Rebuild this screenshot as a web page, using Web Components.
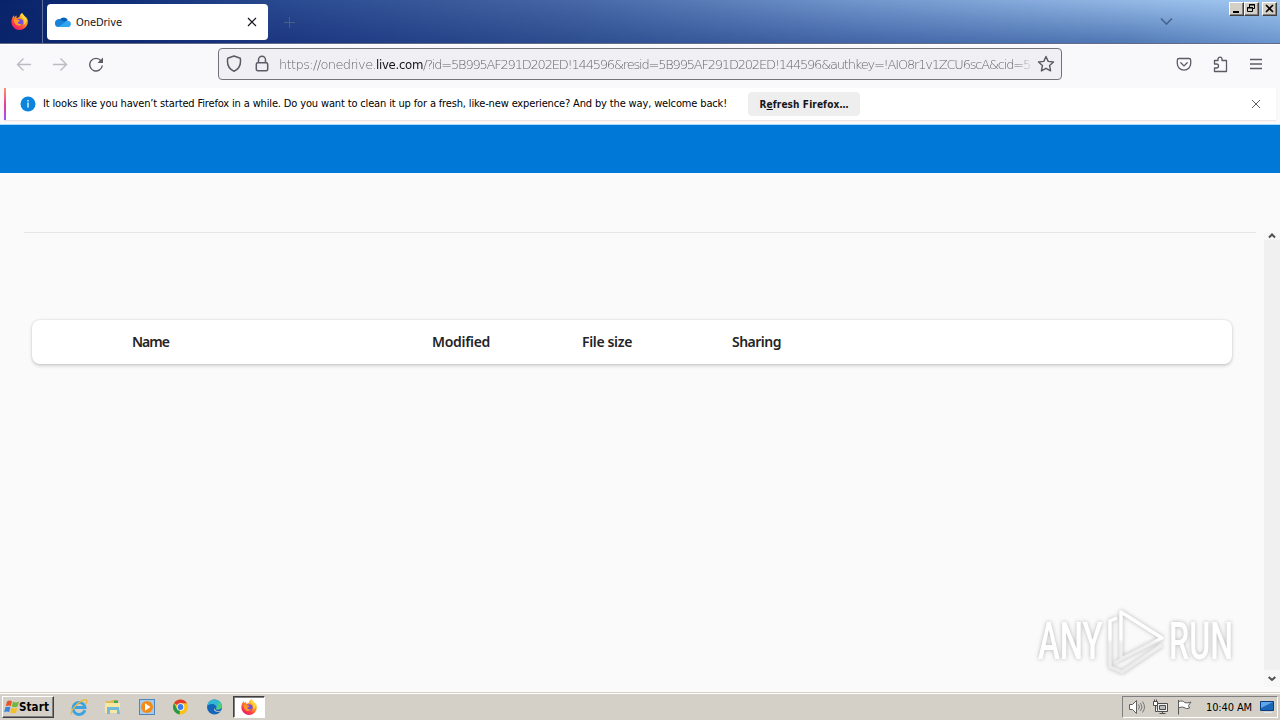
<!DOCTYPE html>
<html lang="en">
<head>
<meta charset="utf-8">
<title>OneDrive</title>
<style>
body{margin:0;width:1280px;height:720px;overflow:hidden;font-family:"DejaVu Sans Condensed","DejaVu Sans",sans-serif}
</style>
</head>
<body>
<desktop-screen></desktop-screen>
<script>
const define=(name,css,html)=>customElements.define(name,class extends HTMLElement{
  connectedCallback(){
    if(this.shadowRoot)return;
    const t=document.createElement('template');
    t.innerHTML=`<style>*{box-sizing:border-box}svg{display:block;flex:none}${css}</style>${html}`;
    this.attachShadow({mode:'open'}).append(t.content.cloneNode(true));
  }
});

/* Text run spaced out to a given width in pixels */
customElements.define('fit-text',class extends HTMLElement{
  connectedCallback(){
    if(this.shadowRoot)return;
    const root=this.attachShadow({mode:'open'});
    root.innerHTML='<style>:host{display:inline-block;white-space:pre;flex:none}span{display:inline-block}</style><span><slot></slot></span>';
    const span=root.querySelector('span'),w=+this.getAttribute('w');
    const n=this.textContent.length;
    span.style.letterSpacing=((w-span.getBoundingClientRect().width)/n)+'px';
    this.style.width=w+'px';
  }
});

const firefox=(s,id)=>`<svg width="${s}" height="${s}" viewBox="0 0 16 16"><defs>
<linearGradient id="${id}" x1=".85" y1=".1" x2=".2" y2="1"><stop offset="0" stop-color="#ffe43d"/><stop offset=".35" stop-color="#ff9a1f"/><stop offset=".7" stop-color="#ff3d45"/><stop offset="1" stop-color="#e3187d"/></linearGradient></defs>
<path fill="url(#${id})" d="M15.3 5.6c-.4-.9-1.1-1.8-1.7-2.1.4.9.7 1.7.8 2.4-.9-2.1-2.3-3-3.500-4.900C10.700.6 10.500.3 10.400 0 8.500 1.100 7.900 3.100 7.800 4.100c-.9 0-1.700.3-2.400.8C5 3.900 5.200 3 5.500 2.400 4.500 2.800 3.800 3.500 3.300 4.100c-.3-.4-.3-1.700-.3-2C2 2.900 1.200 4.200.8 5.600.1 7.600.2 10.400 1.700 12.600 3.100 14.700 5.400 16 8 16c4.300 0 7.800-3.400 7.800-7.700 0-1-.2-1.900-.5-2.700z"/>
<circle cx="8.200" cy="8.600" r="3.300" fill="#7a4be0"/><path fill="#ff9a25" d="M2.600 6.200c1.700-.9 3-.3 3.900.4 1 .1 1.800.1 1.900.5-.1.900-1.700 1-2.100 2 .5 1.500 2.800 1.800 4.100.7-.7 2.400-4.600 3.200-6.400.6C3 9 2.600 7.600 2.600 6.200z"/>
<path fill="#ffd93a" d="M10.400 0c-1.300 1.800-.3 3.700 1 5 1.600 1.600 1.700 4.500.1 6.300 2.400-1.200 3.600-4 2.900-6.300-.8-1.700-2.700-2.900-4-5z"/></svg>`;

define('caption-button',`:host{width:15px;height:14px;display:block;background:#d4d0c8;border:1px solid;border-color:#fff #404040 #404040 #fff;box-shadow:inset -1px -1px #808080}`,`<slot></slot>`);

define('tab-strip',`
:host{display:flex;height:44px;position:relative;background:linear-gradient(90deg,#0a246a 0,#11307a 10%,#29498f 21%,#4767a6 45%,#6f95cb 66%,#96bce8 90%,#a2c9f2 100%);border-bottom:1px solid #626a85}
:host::before{content:"";position:absolute;inset:0;background:linear-gradient(90deg,#0a246a 0,#112c72 10%,#1b367f 21%,#2d4d8f 45%,#4366a8 68%,#5178b4 88%,#6b95cd 100%);-webkit-mask:linear-gradient(180deg,transparent,#000);mask:linear-gradient(180deg,transparent,#000)}
:host>*{position:relative}
.ff{width:43px;border-right:1px solid #606f9e;padding:13px 0 0 11px}
.tab{width:221px;height:36px;margin:4px 0 0 4px;background:#fff;border-radius:4px;display:flex;align-items:center;padding:0 11px 0 8px;color:#15141a;font-size:11px}
.tab fit-text{margin:1px auto 0 5px}
.plus{margin:17px auto 0 16px}
.chev{margin:17px 56px 0 0}
.caps{display:flex;margin:2px 3px 0 0}
caption-button:last-child{margin-left:3px}`,
`<div class="ff">${firefox(17,'fa')}</div>
<div class="tab"><svg width="16" height="16" viewBox="0 0 16 16"><path fill="#0a62b8" d="M5 5.300A4.600 4.600 0 0 1 12.800 6L9 9 3 6.400z"/><path fill="#1683d8" d="M0 9.500A3.800 3.800 0 0 1 6 5.900L13 9.500 3.500 13A3.500 3.500 0 0 1 0 9.500z"/><path fill="#31a5ee" d="M3.500 13 9.500 8.200 12.500 6.500A3.400 3.400 0 0 1 15.500 11.500C15 12.600 14.200 13 13 13z"/></svg>
<fit-text w="46">OneDrive</fit-text>
<svg width="10" height="10" viewBox="0 0 10 10"><path d="M1 1l8 8M9 1l-8 8" stroke="#15141a" stroke-width="1.200"/></svg></div>
<svg class="plus" width="11" height="11" viewBox="0 0 11 11"><path d="M5.500 0v11M0 5.500h11" stroke="#4a5f80"/></svg>
<svg class="chev" width="13" height="9" viewBox="0 0 13 9"><path d="M1 1.500l5.500 5.500L12 1.500" fill="none" stroke="#486590" stroke-width="1.700"/></svg>
<div class="caps"><caption-button><svg width="13" height="12"><path d="M3 9h6" stroke="#000" stroke-width="2"/></svg></caption-button>
<caption-button><svg width="13" height="12" fill="none" stroke="#000"><path d="M4.500 4V1.500h5v4H8M4 2h6M2.500 4.500h5v4h-5zM2 5h6"/></svg></caption-button>
<caption-button><svg width="13" height="12"><path d="M3 2l7 7M10 2L3 9" stroke="#000" stroke-width="1.600"/></svg></caption-button></div>`);

define('address-bar',`
:host{display:flex;width:844px;height:32px;border:1px solid #73737b;border-radius:4px;background:#f0f0f4;align-items:center;padding:0 6px 0 7px}
.lock{margin:0 9px 0 12px}
.url{width:752px;white-space:nowrap;display:flex;font:200 13px "DejaVu Sans","DejaVu Sans Condensed",sans-serif;color:#66666e;-webkit-mask:linear-gradient(90deg,#000 98%,rgba(0,0,0,.2));mask:linear-gradient(90deg,#000 98%,rgba(0,0,0,.2))}
b{font-weight:400;color:#15141a;font-family:"DejaVu Sans Condensed","DejaVu Sans",sans-serif}
.star{margin-left:auto}`,
`<svg width="16" height="18" viewBox="0 0 16 18" fill="none" stroke="#5b5b66" stroke-width="1.500" stroke-linejoin="round"><path d="M8 1L14.300 3.300C15.200 9.300 13.200 14 8 16.300 2.800 14 .8 9.300 1.700 3.300z"/></svg>
<svg class="lock" width="16" height="18" viewBox="0 0 16 18" fill="none" stroke="#5b5b66" stroke-width="1.500"><rect x="2.300" y="7.800" width="11.400" height="7.900" rx="1.500"/><path d="M4.500 7.500V4.700a3.500 3.500 0 0 1 7 0v2.800"/></svg>
<div class="url"><fit-text w="97">https://onedrive.</fit-text><b><fit-text w="47">live.com</fit-text></b><fit-text w="607">/?id=5B995AF291D202ED!144596&amp;resid=5B995AF291D202ED!144596&amp;authkey=!AIO8r1v1ZCU6scA&amp;cid=5</fit-text></div>
<svg class="star" width="18" height="18" viewBox="0 0 18 18" fill="none" stroke="#5b5b66" stroke-width="1.400" stroke-linejoin="round"><path d="M9 1.500l2.200 4.900 5.300.6-3.900 3.600 1 5.300L9 13.300l-4.600 2.600 1-5.300L1.500 7l5.300-.6z"/></svg>`);

define('nav-toolbar',`
:host{display:flex;height:44px;background:#f9f9fb;align-items:center;padding:0 16px 4px;box-shadow:inset 0 1px #fff}
.r{margin:0 20px}.reload{margin-right:114px}
address-bar{margin-right:auto}
.p{margin-right:20px}.x{margin-right:19px}`,
`<svg width="16" height="16" viewBox="0 0 16 16" fill="none" stroke="#bbbbc2" stroke-width="1.400"><path d="M15 8.500H1.500M7.500 2.500l-6 6 6 6"/></svg>
<svg class="r" width="16" height="16" viewBox="0 0 16 16" fill="none" stroke="#bbbbc2" stroke-width="1.400"><path d="M1 8.500h13.500M8.500 2.500l6 6-6 6"/></svg>
<svg class="reload" width="16" height="16" viewBox="0 0 16 16"><path d="M13 4.800A6.300 6.300 0 1 0 14.300 9.500" fill="none" stroke="#5b5b66" stroke-width="1.400"/><path d="M15 1.500V7H9.500z" fill="#5b5b66"/></svg>
<address-bar></address-bar>
<svg class="p" width="16" height="16" viewBox="0 0 16 16" fill="none" stroke="#5b5b66" stroke-width="1.300"><path d="M3 2.500h10a1.700 1.700 0 0 1 1.700 1.700V7.500a6.700 6.700 0 0 1-13.400 0V4.200A1.700 1.700 0 0 1 3 2.500z"/><path d="M4.800 6.800L8 9.900l3.200-3.100" stroke-linecap="round"/></svg>
<svg class="x" width="17" height="17" viewBox="0 0 17 17" fill="none" stroke="#5b5b66" stroke-width="1.300" stroke-linejoin="round"><path d="M2.500 7V4.500H6V3.200a2 2 0 0 1 4 0v1.300h4.500V15.500h-12V12h2a2 2 0 0 0 0-4h-2z"/></svg>
<svg width="16" height="16" viewBox="0 0 16 16"><path d="M2 3.500h12M2 8h12M2 12.500h12" stroke="#5b5b66" stroke-width="1.300"/></svg>`);

define('notice-bar',`
:host{display:block;height:37px;background:#f9f9fb;padding:0 4px 0 4px;border-bottom:1px solid #a9dcfb}
.in{height:32px;background:#fff;display:flex;align-items:center;padding:0 15px 0 14px;border-left:2px solid;border-image:linear-gradient(#ff9a6c,#e23a9d 55%,#9059ff) 1;box-shadow:0 1px 1px #f3e2e2;font-size:11px;color:#000}
.msg{margin:-1px 21px 0 7px}
button{font:bold 10px "DejaVu Sans Condensed","DejaVu Sans",sans-serif;width:112px;height:24px;border:0;border-radius:4px;background:#eeeeef;padding:0;color:#15141a;margin-right:auto}
u{text-underline-offset:1px}`,
`<div class="in"><svg width="16" height="16" viewBox="0 0 16 16"><circle cx="8" cy="8" r="7.500" fill="#0a84dc"/><path d="M8 6.500v5M8 4v1.500" stroke="#fff" stroke-width="1.300"/></svg>
<fit-text class="msg" w="684">It looks like you haven’t started Firefox in a while. Do you want to clean it up for a fresh, like-new experience? And by the way, welcome back!</fit-text>
<button><fit-text w="89">R<u>e</u>fresh Firefox…</fit-text></button>
<svg width="10" height="10" viewBox="0 0 10 10"><path d="M1 1l8 8M9 1l-8 8" stroke="#5b5b66"/></svg></div>`);

define('file-list-header',`
:host{display:grid;grid-template-columns:300px 150px 150px 1fr;align-items:center;height:44px;margin:87px 32px 0;padding:0 0 1px 100px;background:#fff;border-radius:8px;box-shadow:0 1.600px 3.600px rgba(0,0,0,.17),0 0 2px rgba(0,0,0,.12);font:600 14px "Noto Sans",sans-serif;color:#242424}`,
`<fit-text w="37">Name</fit-text><fit-text w="58">Modified</fit-text><fit-text w="50">File size</fit-text><fit-text w="49">Sharing</fit-text>`);

define('scroll-rail',`
:host{display:flex;flex-direction:column;justify-content:space-between;align-items:center;width:16px;background:#f0f0f0}
span{height:7px;width:16px;background:#f7f7f7;padding:0 4px}
span:last-child{height:17px;padding-top:6px}`,
`<span><svg width="8" height="6"><path d="M1 4.500l3-3 3 3" fill="none" stroke="#505050" stroke-width="2"/></svg></span><span><svg width="8" height="6"><path d="M.7 1l3.300 3 3.300-3" fill="none" stroke="#505050" stroke-width="2"/></svg></span>`);

define('run-watermark',`:host{position:absolute;left:1030px;top:602px;width:212px;height:76px}svg{overflow:visible;filter:drop-shadow(0 0 2px rgba(0,0,0,.28))}text{font:500 51px Roboto,sans-serif}`,
`<svg width="212" height="76" viewBox="0 0 212 76"><defs><linearGradient id="w" x1="0" y1="0" x2="0" y2="76" gradientUnits="userSpaceOnUse"><stop offset=".48" stop-color="#fff"/><stop offset=".54" stop-color="#efefef"/><stop offset="1" stop-color="#eaeaea"/></linearGradient></defs>
<g fill="url(#w)"><g transform="translate(8 57) scale(.66 1)"><text textLength="98" lengthAdjust="spacingAndGlyphs">ANY</text></g><g transform="translate(139 57) scale(.66 1)"><text textLength="97" lengthAdjust="spacingAndGlyphs">RUN</text></g></g>
<g fill="none" stroke="url(#w)" stroke-width="3.400" stroke-linejoin="round"><path d="M91 57V10l41 26zM87 16l-7 3v46l12 5 40-27"/><path d="M84 61l48-25" stroke-width="2.500"/></g></svg>`);

define('onedrive-page',`
:host{display:flex;flex-direction:column;flex:1;background:#fafafa;min-height:0}
header{height:48px;background:#0078d7}
.cmd{height:60px;margin:0 24px;border-bottom:1px solid #e6e6e6}
.body{flex:1;display:flex;margin-bottom:5px}
main{flex:1}`,
`<header></header><div class="cmd"></div><div class="body"><main><file-list-header></file-list-header></main><scroll-rail></scroll-rail></div>`);

define('task-bar',`
:host{display:flex;height:28px;background:#d4d0c8;box-shadow:inset 0 1px #d4d0c8,inset 0 2px #fff;padding:3px 2px 1px 2px;align-items:center;color:#000}
.start{width:52px;height:22px;display:flex;align-items:center;padding:0 1px;border:1px solid;border-color:#fff #404040 #404040 #fff;box-shadow:inset -1px -1px #808080;font-weight:bold;font-size:11.500px;margin-right:16px}
.start fit-text{margin-left:-1px}
.app{margin-right:16px}
.act{width:32px;height:22px;background:#fff;border:1px solid;border-color:#404040 #fff #fff #404040;padding:2px 0 0 7px;margin-left:-7px;box-shadow:inset 1px 1px #808080}
.tray{margin-left:auto;width:156px;height:22px;border:1px solid;border-color:#808080 #fff #fff #808080;display:flex;align-items:center;padding-left:5px;font-size:11px}
.tray svg{margin-right:7px}.tray fit-text{margin:0 7px 0 6px}.tray svg:last-child{margin:0}`,
`<div class="start"><svg width="16" height="16" viewBox="0 0 16 16"><path fill="#e8542a" d="M3 2.500C5 1 6.500 1.500 8 2.300L6.700 7.300C5 6.300 3.500 6.500 1.700 7.300z"/><path fill="#73b63c" d="M9 2.700c2 1 4 1 6-.1l-1.400 5c-2 1-4 .8-5.900-.1z"/><path fill="#3d83d6" d="M1.400 8.300c2-.9 3.500-.9 5 0l-1.300 5c-1.500-.9-3-1-5 0z"/><path fill="#f5bd28" d="M7.400 8.700c2 .9 4 1 5.900 0l-1.300 5c-2 .9-4 .8-5.900-.1z"/></svg><fit-text w="30">Start</fit-text></div>
<svg class="app" width="18" height="18" viewBox="0 0 18 18"><path d="M14.800 12.300A6 6 0 1 1 15 9.500H5" fill="none" stroke="#3da3df" stroke-width="2.900"/><path d="M1.500 16.500C-.5 13 10 1.200 16 1.800c1.500.5 1 2.700-.5 4.200" fill="none" stroke="#e9b83b" stroke-width="1.400"/></svg>
<svg class="app" width="18" height="18" viewBox="0 0 18 18"><path fill="#e3b957" d="M2 3h5l1-1h6v12H2z"/><path fill="#f8e79f" d="M1 5h15v10H1z"/><path fill="#74b9dc" d="M3 9h12l1 7h-3v-4H6v4H3z"/><path fill="#4ba35a" d="M10 2.500h4V5h-4z"/></svg>
<svg class="app" width="18" height="18" viewBox="0 0 18 18"><rect x="1.500" y="1.500" width="15" height="15" fill="#a9cbea" stroke="#4c86bd"/><circle cx="9" cy="9" r="6" fill="#f48a18"/><path fill="#fff" d="M7 5.300v7.400l5.500-3.700z"/></svg>
<svg class="app" width="18" height="18" viewBox="0 0 18 18"><circle cx="8.500" cy="9" r="7.500" fill="#fbc116"/><path fill="#df3b2f" d="M8.500 9L2 5.200A7.500 7.500 0 0 1 15 5.300H8.500z"/><path fill="#279847" d="M8.500 9l-1 7.400A7.500 7.500 0 0 1 2 5.200L5.300 11z"/><circle cx="8.500" cy="9" r="3.800" fill="#fff"/><circle cx="8.500" cy="9" r="2.900" fill="#3b7ded"/></svg>
<svg class="app" width="18" height="18" viewBox="0 0 18 18"><circle cx="8.500" cy="9" r="7.500" fill="#1565b9"/><path fill="#31b9d3" d="M1 8.500C2 3.500 5 1.500 8.500 1.500c4 0 7.500 2.900 7.500 6.500 0 3-3.500 4.200-6 3C11.500 8.500 9 6 6 6 3.500 6 1.800 7 1 8.500z"/><path fill="#53cf7b" d="M12.500 3c5 4 3.500 8.500-.5 8.500-1.200 0-2-.3-2-.8 2-2 3-4.500 2.500-7.700z"/><path fill="#d4d0c8" d="M9 10c-.5 3 3.500 4 6.300 2.600C14 15 9 14 8 12z"/></svg>
<div class="act">${firefox(16,'fb')}</div>
<div class="tray"><svg width="17" height="16" viewBox="0 0 17 16" fill="#fff" stroke="#5f5f5f"><path d="M1.500 5.500h3l4-4v13l-4-4h-3z"/><path fill="none" d="M10.500 5.500q2 2.500 0 5M12.500 4q3 4 0 8M14.500 2.500q4 5.500 0 11" stroke="#777"/></svg>
<svg width="17" height="16" viewBox="0 0 17 16" fill="#eee" stroke="#4d4d4d"><path d="M5.500 4.500h10v8h-10zM7.500 14.500h6M10.500 12.500v2"/><path fill="#bbb" d="M7.500 6.500h6v4h-6z"/><path fill="#fff" d="M1.500 2.500h4v4h-4zM2.500.5v2M4.500.5v2M3.500 6.500v6h2"/></svg>
<svg width="17" height="16" viewBox="0 0 17 16" fill="#fff" stroke="#5a5a5a"><path d="M2.500 1v14.500M2.500 2.500c3-1 5-.5 6 .8 2 1 4 .6 6.500-.3l-2.500 3.500 1 2.500c-2 1-4 .5-5.500-.5-2-.8-3.500-.3-5.500.5z"/></svg>
<fit-text w="46">10:40 AM</fit-text>
<svg width="16" height="16" viewBox="0 0 16 16"><path fill="#1c66b8" stroke="#0b3e80" d="M1.500 2.500h13v9h-13z"/><path fill="#5ca6e9" d="M2 3h12L2 9z"/><path fill="#d9e8f5" d="M5 13h8v1H5z"/></svg></div>`);

define('desktop-screen',`:host{display:flex;flex-direction:column;width:1280px;height:720px;position:relative;overflow:hidden}
tab-strip,nav-toolbar,notice-bar,task-bar{flex:none}`,
`<tab-strip></tab-strip><nav-toolbar></nav-toolbar><notice-bar></notice-bar><onedrive-page></onedrive-page><task-bar></task-bar><run-watermark></run-watermark>`);
</script>
</body>
</html>
